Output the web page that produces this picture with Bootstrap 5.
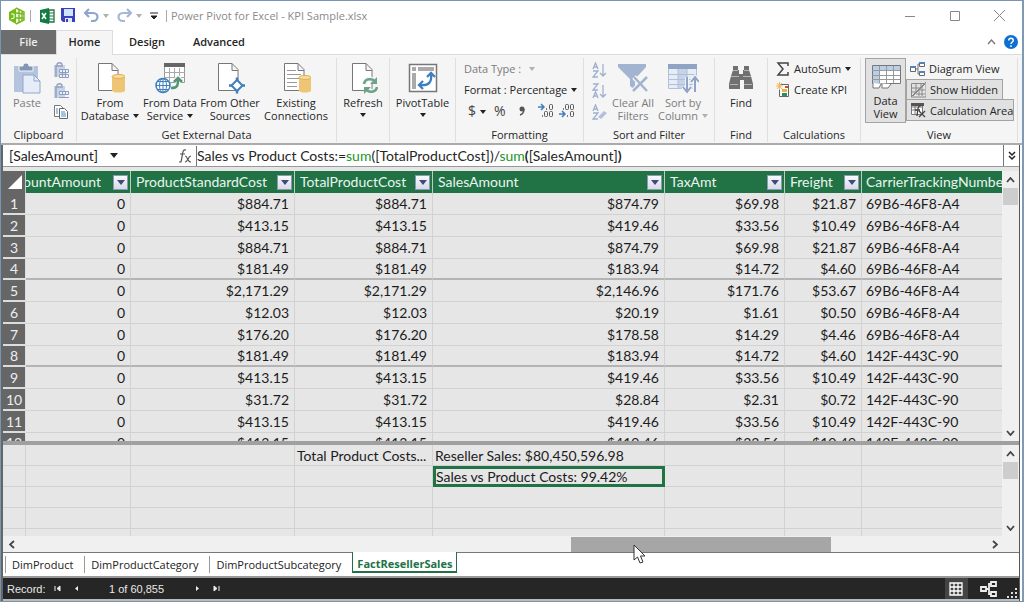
<!DOCTYPE html>
<html lang="en">
<head>
<meta charset="utf-8">
<meta name="viewport" content="width=device-width, initial-scale=1">
<title>Power Pivot for Excel - KPI Sample.xlsx</title>
<link rel="stylesheet" href="https://cdn.jsdelivr.net/npm/bootstrap@5.3.0/dist/css/bootstrap.min.css">
<style>
body{font:11px/13px "Open Sans",sans-serif;color:#262626;background:#fff}
button{color:inherit;font:inherit;background:none;border:0;padding:0}
svg{display:block;flex:none}
.app{height:100vh;min-height:480px;border:1px solid #7896b4;border-bottom-color:#7b93a8;border-right:2px solid #7f9ab5}
.caret{display:inline-block;border:3px solid transparent;border-top:4px solid #222;border-bottom:0;vertical-align:2px;margin-left:4px}
.dim{color:#7c7c7c}.dim .caret,.caret.dim{border-top-color:#b0b0b0}
/* title bar */
.titlebar{height:29px;padding-left:7px;color:#8a8a8a}
.titlebar .vsep{width:1px;height:12px;background:#aaa}
.wctl{width:45px;height:28px}
/* ribbon tabs */
.rtabs{height:24px}
.rtabs a{height:24px;line-height:24px;color:#262626;text-decoration:none;text-align:center;font-weight:600;font-size:11px}
.rtabs .filetab{background:#6d6d6d;color:#eee;width:55px}
.rtabs .active{background:#f5f5f5;border:1px solid #dcdcdc;border-bottom:0;width:57px;line-height:22px;height:25px;z-index:1}
/* ribbon */
.ribbon{height:91px;background:#f5f5f5;border-top:1px solid #dcdcdc;border-bottom:2px solid #ababab}
.rgroup{border-right:1px solid #dfdfdf;margin:3px 0 4px;height:84px}
.rgroup .gbody{height:70px;flex:none}
.rgroup .gname{text-align:center}
.big{display:flex;flex-direction:column;align-items:center;padding-top:4px;white-space:nowrap;flex:none}
.big svg{margin-bottom:2px}
.line{display:flex;align-items:center;height:21px;white-space:nowrap}
.pressed{background:#e1e1e1;border:1px solid #a3a3a3}
.pressed+.pressed{margin-top:-1px;height:22px}
/* sheet */
.sheet{border-left:2px solid #666;border-right:1px solid #555;margin-right:2px;background:#e6e6e6;font:14px/20px Lato,sans-serif;min-height:0}
.fbar{height:22px;background:#fff;border-bottom:1px solid #999;flex:none}
.fbar select{border:0;background:#fff;font:inherit;color:#222;outline:0;padding:0;appearance:none}
.fbar .names{width:103px;padding-left:6px}
.ftext{white-space:nowrap}
.ftext i{font-style:normal;color:#1d9428}
.data{table-layout:fixed;width:100%;border-collapse:separate;border-spacing:0;color:#1c1c1c}
.data th,.data td{padding:0 5px;height:22px;line-height:20px;overflow:hidden;white-space:nowrap;font-weight:400;border-right:1px solid #d2d2d2;border-bottom:1px solid #d2d2d2;text-align:right}
.data thead th{background:#217346;color:#e9f5ee;text-align:left;border-bottom:0;height:22px;border-right-color:#b7d0c2;padding:0 2px 0 5px}
.data tbody th{background:#666;color:#eee;text-align:center;padding:0;border-bottom:2px solid #ddd;border-right-color:#ddd;font-size:14px;line-height:19px}
.rows tbody tr:nth-child(4n) td{height:21px;line-height:19px;border-bottom:2px solid #b4b4b4}
.rows tbody tr:nth-child(4n) th{height:21px;line-height:18px}
.data td:last-child,.data th:last-child{text-align:left;padding-left:4px;border-right:0}
.data thead th:first-child{padding:0;background:#666}
.clipleft{display:flex;justify-content:flex-end;overflow:hidden;flex:1;min-width:0;margin-right:12px}
.filt{width:15px;height:15px;flex:none;background:linear-gradient(#f8f9fd,#d8dae6);border:1px solid #8d98b5;display:flex;align-items:center;justify-content:center}
.filt:before{content:"";border:4px solid transparent;border-top:5px solid #3f4a7d;border-bottom:0}
.split{height:4px;background:#a0a0a0;flex:none}
.calc{height:91px;overflow:hidden;flex:none}
.calc .data td{height:21px;line-height:19px;text-align:left;padding:0 2px;font-size:14px}
.calc .data td.sel{border:3px solid #217346;line-height:15px;padding:0}
.vbar{width:17px;background:#f0f0f0;flex:none}
.vbar button{height:17px;width:17px;display:flex;align-items:center;justify-content:center}
.vthumb{height:17px;background:#cdcdcd;margin:0 1px}
.hbar{height:17px;background:#f0f0f0;border-bottom:1px solid #777;flex:none;font-size:0}
.hbar button{width:17px;display:flex;align-items:center;justify-content:center}
.hthumb{background:#a6a6a6;height:15px;position:absolute;left:57%;width:27%;top:1px}
.pointer{position:absolute;left:24%;top:7px;z-index:3}
.stabs{height:25px;background:#fff;flex:none;font:11px/20px "Open Sans",sans-serif;border-bottom:2px solid #999;padding-left:2px}
.stabs a{color:#222;text-decoration:none;border-left:1px solid #999;height:17px;line-height:17px;padding:0 11px 0 6px;margin-top:3px}
.stabs a.on{color:#217346;font-weight:700;border:2px solid #217346;border-width:0 1px 2px;height:21px;line-height:23px;margin-top:-1px;padding:0 4px;background:#fff;position:relative}
.status{height:23px;background:#262626;color:#e8e8e8;font:11px/20px "Liberation Sans",sans-serif;flex:none;border-bottom:2px solid #bbb}
.status .step{margin-left:13px}
</style>
</head>
<body>
<div class="app d-flex flex-column overflow-hidden">
<header class="titlebar d-flex align-items-center flex-shrink-0">
  <svg width="18" height="18" viewBox="0 0 18 18"><path d="M1 5 8 1v16l-7-4z" fill="#74ba1d"/><path d="M8 1 16 5v8l-8 4M8 6l8 1M8 11h8M11 3v12M14 4v10" fill="#eff8df" stroke="#74ba1d" stroke-width="1.4"/><path d="M3 7h3v4L3 12" fill="none" stroke="#fff"/></svg>
  <span class="vsep ms-1 me-2"></span>
  <svg width="18" height="16" viewBox="0 0 18 16"><path d="M10 2h5v12h-5z" fill="#fff" stroke="#217346" stroke-width="1.3"/><path d="M10 5h5M10 8h5M10 11h5" stroke="#217346"/><path d="M1 2 10 0v16l-9-2z" fill="#107c41"/><path d="m3 5 4 6M7 5l-4 6" stroke="#fff" stroke-width="1.5"/></svg>
  <svg class="ms-1" width="15" height="15" viewBox="0 0 15 15"><path d="M0 0h14v14H2l-2-2z" fill="#3640c0"/><path d="M3 1h9v7H3z" fill="#cfe3ff"/><path d="M4 10h7v4H4z" fill="#e6e6f4"/><path d="M5 11h2v3H5z" fill="#3640c0"/></svg>
  <svg class="ms-2" width="15" height="15" viewBox="0 0 15 15"><path d="M5 1 1 5l4 4M2 5h7c6 0 6 8 0 8H7" fill="none" stroke="#8ea4cf" stroke-width="2.200"/></svg>
  <span class="caret dim"></span>
  <svg class="ms-2" width="15" height="15" viewBox="0 0 15 15"><path d="m10 1 4 4-4 4M13 5H6c-6 0-6 8 0 8h2" fill="none" stroke="#a5b6d6" stroke-width="2.200"/></svg>
  <span class="caret dim"></span>
  <svg class="ms-2" width="8" height="8" viewBox="0 0 8 8"><path d="M0 1h8M1 4h6L4 7z" fill="#222" stroke="#222"/></svg>
  <span class="vsep ms-2"></span>
  <span class="flex-fill text-nowrap ps-1">Power Pivot for Excel - KPI Sample.xlsx</span>
  <button class="wctl" aria-label="Minimize"><svg class="m-auto" width="10" height="10"><path d="M0 5.500h10" stroke="#888"/></svg></button>
  <button class="wctl" aria-label="Maximize"><svg class="m-auto" width="10" height="10"><path d="M.5.5h9v9h-9z" fill="none" stroke="#888"/></svg></button>
  <button class="wctl" aria-label="Close"><svg class="m-auto" width="11" height="11"><path d="m0 0 11 11M11 0 0 11" stroke="#888"/></svg></button>
</header>
<nav class="rtabs d-flex flex-shrink-0">
  <a class="filetab" href="#">File</a><a class="active position-relative" href="#">Home</a><a class="ps-3 pe-3" href="#">Design</a><a class="ps-2 ms-1" href="#">Advanced</a>
  <div class="ms-auto d-flex align-items-center gap-2 pe-1">
   <svg width="9" height="6"><path d="m1 5 3.500-4L8 5" fill="none" stroke="#777" stroke-width="1.300"/></svg>
   <button aria-label="Help"><svg width="14" height="14"><circle cx="7" cy="7" r="7" fill="#0f6fd0"/><path d="M4.700 5.500c0-3 4.600-3 4.600 0C9.300 7 7 7 7 9M7 10.200V12" fill="none" stroke="#fff" stroke-width="1.400"/></svg></button>
  </div>
</nav>
<section class="ribbon d-flex flex-shrink-0">
  <div class="rgroup" style="width:76px">
    <div class="gbody d-flex">
      <button class="big dim" style="width:52px"><svg width="30" height="32" viewBox="0 0 30 32"><path d="M2 4h24v26H2z" fill="#b5c4de"/><path d="M7 4h4c0-4 6-4 6 0h4v5H7z" fill="#8496b5" stroke="#f5f5f5"/><path d="M11 13h11l6 6v12H11z" fill="#e6edf8" stroke="#90a5ca"/><path d="M22 13v6h6" fill="none" stroke="#90a5ca"/></svg>Paste</button>
      <div class="d-flex flex-column gap-1 pt-1">
        <button aria-label="Paste append"><svg width="17" height="17"><path d="M1 3h11v12H1z" fill="#c9d3e4"/><path d="M4 3c0-3 5-3 5 0M3 4h7M3 3v12" fill="none" stroke="#93a3c0" stroke-width="1.500"/><path d="M6.500 7.500h9v3h-9zM6.500 12.500h9v3h-9zM9.500 7v9M12.500 7v9" fill="#eef2f8" stroke="#8d9fc0"/></svg></button>
        <button aria-label="Paste replace"><svg width="17" height="17"><path d="M1 3h11v12H1z" fill="#c9d3e4"/><path d="M4 3c0-3 5-3 5 0M3 4h7M3 3v12" fill="none" stroke="#93a3c0" stroke-width="1.500"/><path d="M6.500 8.500h9v3h-9zM6 14.500h10M9.500 8v4M12.500 8v4" fill="#eef2f8" stroke="#8d9fc0"/></svg></button>
        <button aria-label="Copy"><svg width="17" height="16"><path d="M1.500 1.500h6l3 3v8h-9z" fill="#fff" stroke="#777"/><path d="M6.500 4.500h5l3 3v7h-8z" fill="#fff" stroke="#666"/><path d="M3 5h2M3 7h2M3 9h2M8 8h4M8 10h5M8 12h5" stroke="#4a86c6"/></svg></button>
      </div>
    </div>
    <div class="gname">Clipboard</div>
  </div>
  <div class="rgroup" style="width:260px">
    <div class="gbody d-flex">
      <button class="big" style="width:66px"><svg width="30" height="32" viewBox="0 0 30 32"><path d="M3.500 1.500H17l6 6v21H3.500zM17 1.500v7h6" fill="#fff" stroke="#777"/><path d="M17 14h13v15c-3 2-10 2-13 0z" fill="#edc574"/><ellipse cx="23.500" cy="14.500" rx="6.500" ry="2" fill="#f7dba0" stroke="#e0af50"/></svg><span>From<br>Database<i class="caret"></i></span></button>
      <button class="big" style="width:54px"><svg width="32" height="32" viewBox="0 0 32 32"><path d="M10.500 2.500h20v18h-20z" fill="#fff" stroke="#999"/><path d="M10 1h21v4H10z" fill="#666"/><path d="M10 10.500h21M10 15.500h21M15.500 6v14M20.500 6v14M25.500 6v14" stroke="#aaa"/><circle cx="9" cy="23.500" r="7" fill="#fff" stroke="#3f7fbd" stroke-width="1.500"/><path d="M2 23.500h14M9 16v15M4 19.500h10M4 27.500h10" stroke="#3f7fbd" fill="none"/><ellipse cx="9" cy="23.500" rx="3.500" ry="7" fill="none" stroke="#3f7fbd"/><path d="M17 26c7 0 7-3 7-9M20 20l4-4 4 4" fill="none" stroke="#f5f5f5" stroke-width="5"/><path d="M17 26c7 0 7-3 7-9M20 20l4-4 4 4" fill="none" stroke="#559477" stroke-width="2.500"/></svg><span>From Data<br>Service<i class="caret"></i></span></button>
      <button class="big" style="width:66px"><svg width="30" height="32" viewBox="0 0 30 32"><path d="M3.500 1.500H17l6 6v21H3.500zM17 1.500v7h6" fill="#fff" stroke="#777"/><path d="M14 23.500h16M22 15.500v16" stroke="#3f7fbd" stroke-width="2.500"/><path d="m22 18 5.500 5.500L22 29l-5.500-5.500z" fill="#fff" stroke="#3f7fbd" stroke-width="2"/></svg><span>From Other<br>Sources</span></button>
      <button class="big" style="width:66px"><svg width="30" height="32" viewBox="0 0 30 32"><path d="M3.500 1.500H17l6 6v21H3.500zM17 1.500v7h6" fill="#fff" stroke="#777"/><path d="M6 8.500h9M6 12.500h14M6 16.500h12M6 20.500h10M6 24.500h10" stroke="#999"/><path d="M18 15h12v14c-3 2-9 2-12 0z" fill="#edc574"/><ellipse cx="24" cy="15.500" rx="6" ry="2" fill="#f7dba0" stroke="#e0af50"/></svg><span>Existing<br>Connections</span></button>
    </div>
    <div class="gname">Get External Data</div>
  </div>
  <div class="rgroup" style="width:53px"><button class="big w-100"><svg width="30" height="32" viewBox="0 0 30 32"><path d="M4.500 1.500H18l6 6v21H4.500zM18 1.500v7h6" fill="#fff" stroke="#777"/><path d="M16 22c1-6 9-6 11-2M29 25c-1 6-9 6-11 2" fill="none" stroke="#f5f5f5" stroke-width="5"/><path d="M16 22c1-6 9-6 11-2M29 25c-1 6-9 6-11 2" fill="none" stroke="#6aa38a" stroke-width="2.500"/><path d="M29 15v7h-7zM16 32v-7h7z" fill="#6aa38a"/></svg>Refresh<i class="caret mt-1 ms-0"></i></button></div>
  <div class="rgroup" style="width:66px"><button class="big w-100"><svg width="30" height="32" viewBox="0 0 30 32"><path d="M1.500 2.500h27v27h-27z" fill="#fff" stroke="#777" stroke-width="1.500"/><path d="M4 5h4v4H4zM10 5h16v4H10zM4 11h4v16H4z" fill="#aaa"/><path d="M12 23c9 1 12-3 11-11M15 19l-4 4 4 4M19 15l4-4 4 4" fill="none" stroke="#3f7fbd" stroke-width="2.300"/></svg>PivotTable<i class="caret mt-1 ms-0"></i></button></div>
  <div class="rgroup" style="width:128px">
    <div class="gbody ps-2">
      <button class="line dim">Data Type :<i class="caret ms-2"></i></button>
      <button class="line">Format : Percentage<i class="caret"></i></button>
      <div class="line" style="font-size:14px;color:#444">
        <button class="ms-1" aria-label="Currency">$<i class="caret ms-1"></i></button><button class="ms-2">%</button>
        <button class="ms-2 ps-1" aria-label="Thousands separator"><svg width="8" height="12"><circle cx="4" cy="4" r="2.500" fill="#555"/><path d="M6 4c0 3-1 5-4 6" fill="none" stroke="#555" stroke-width="1.500"/></svg></button>
        <button class="ms-2 ps-1" aria-label="Increase decimal"><svg width="17" height="15"><path d="M0 4h6M3 1l3 3-3 3" fill="none" stroke="#3f7fbd" stroke-width="1.500"/><path d="M8 6h1M4 13h1" stroke="#555" stroke-width="1.500"/><g fill="none" stroke="#555"><rect x="11.500" y="1.500" width="3" height="5" rx="1"/><rect x="6.500" y="8.500" width="3" height="5" rx="1"/><rect x="11.500" y="8.500" width="3" height="5" rx="1"/></g></svg></button>
        <button class="ms-1" aria-label="Decrease decimal"><svg width="17" height="15"><path d="M0 11h6M3 8l3 3-3 3" fill="none" stroke="#3f7fbd" stroke-width="1.500"/><path d="M4 6h1M8 13h1" stroke="#555" stroke-width="1.500"/><g fill="none" stroke="#555"><rect x="6.500" y="1.500" width="3" height="5" rx="1"/><rect x="11.500" y="1.500" width="3" height="5" rx="1"/><rect x="11.500" y="8.500" width="3" height="5" rx="1"/></g></svg></button>
      </div>
    </div>
    <div class="gname">Formatting</div>
  </div>
  <div class="rgroup" style="width:131px">
    <div class="gbody d-flex dim">
      <div class="d-flex flex-column gap-1 ps-2 pt-1" style="width:25px">
        <button aria-label="Sort A to Z"><svg width="15" height="17"><path d="m1 7 2.500-6L6 7M2 5h3M1 9h5l-5 6h5M11 2v12M8 11l3 3 3-3" fill="none" stroke="#9fb0ce" stroke-width="1.300"/></svg></button>
        <button aria-label="Sort Z to A"><svg width="15" height="17"><path d="M1 1h5L1 7h5M1 15l2.500-6L6 15M2 13h3M11 2v12M8 11l3 3 3-3" fill="none" stroke="#9fb0ce" stroke-width="1.300"/></svg></button>
        <button aria-label="Clear sort"><svg width="15" height="17"><path d="m1 7 2.500-6L6 7M2 5h3M1 9h5l-5 6h5" fill="none" stroke="#9fb0ce" stroke-width="1.300"/><path d="m6 13 6-6 3 2-6 6z" fill="#b2c0d9"/></svg></button>
      </div>
      <button class="big" style="width:48px"><svg width="32" height="32" viewBox="0 0 32 32"><path d="M1 2h28v3L18 17v11l-5-4v-7L1 5z" fill="#a3b4d1"/><path d="m17 15 13 14M30 15 16 29" stroke="#f5f5f5" stroke-width="5"/><path d="m17 15 13 14M30 15 16 29" stroke="#a3b4d1" stroke-width="2.500"/></svg><span>Clear All<br>Filters</span></button>
      <button class="big" style="width:52px"><svg width="32" height="32" viewBox="0 0 32 32"><path d="M1.500 2.500h28v24h-28z" fill="#e7edf6" stroke="#b1c0d9"/><path d="M1 2h29v5H1z" fill="#8fa3c5"/><path d="M11 7h9v19h-9z" fill="#c7d4e7"/><path d="M1 12.500h29M1 17.500h29M1 22.500h29M11 7v19M20 7v19" stroke="#b1c0d9"/><path d="M20 15v14M16 25l4 5 4-5M28 30V16M24 20l4-5 4 5" fill="none" stroke="#f5f5f5" stroke-width="4"/><path d="M20 15v14M16 25l4 5 4-5M28 30V16M24 20l4-5 4 5" fill="none" stroke="#8fa3c5" stroke-width="2"/></svg><span>Sort by<br>Column<i class="caret"></i></span></button>
    </div>
    <div class="gname">Sort and Filter</div>
  </div>
  <div class="rgroup" style="width:53px"><div class="gbody"><button class="big w-100"><svg width="28" height="32" viewBox="0 0 28 32"><path d="M6 4h5v4h1v4h4V8h1V4h5v4l2 6 2 8v5h-9v-9h-4v9H2v-5l2-8 2-6z" fill="#707070"/><path d="M6 8.500h5M17 8.500h5M4 14.500h8M16 14.500h8M3 22.500h8M17 22.500h8" stroke="#b5b5b5"/></svg>Find</button></div><div class="gname">Find</div></div>
  <div class="rgroup" style="width:93px">
    <div class="gbody ps-2">
      <button class="line"><svg class="me-1" width="14" height="14"><path d="M12 4V1H2l5 6-5 6h10v-3" fill="none" stroke="#444" stroke-width="1.500"/></svg>AutoSum<i class="caret"></i></button>
      <button class="line"><svg class="me-1" width="14" height="16"><path d="M3.500 2.500h9v12h-9z" fill="#fff" stroke="#666"/><path d="M9 4h3v2H9z" fill="#d04a30"/><path d="M6 7h5v3H6z" fill="#e9b34b"/><path d="M6 11h5v3H6z" fill="#328b5c"/><path d="M0 4h7M3.500 0v8M1 1l5 6M6 1 1 7" stroke="#efb55a"/></svg>Create KPI</button>
    </div>
    <div class="gname">Calculations</div>
  </div>
  <div class="rgroup flex-fill me-1">
    <div class="gbody d-flex">
      <button class="big pressed ms-1" style="width:41px;height:65px"><svg width="30" height="29" viewBox="0 0 30 29"><path d="M1.500 2.500h28v18h-28z" fill="#fff" stroke="#777"/><path d="M2 3h27v4H2zM2 3h6v17H2z" fill="#b9cfe8"/><path d="M1 7.500h28M1 12.500h28M1 16.500h28M8.500 3v17M15.500 3v17M22.500 3v17" stroke="#999"/><path d="M2 20v5h6l2-4h1v4h6l3-4" fill="#fff" stroke="#777"/></svg><span>Data<br>View</span></button>
      <div class="d-flex flex-column align-items-start">
        <button class="line px-1"><svg class="me-1" width="15" height="16"><path d="M5 8h3M8 3v10M8 3h2M8 13h2" stroke="#777" fill="none"/><path d="M.5 5.500h5v5h-5zM9.500 1.500h5v4h-5zM9.500 10.500h5v4h-5z" fill="#fff" stroke="#666"/><path d="M0 5h6v2H0zM9 1h6v2H9zM9 10h6v2H9z" fill="#4f84bd"/></svg>Diagram View</button>
        <button class="line pressed px-1"><svg class="me-1" width="15" height="16"><path d="M.5 1.500h14v13H.5zM5 1v14M10 1v14M0 6h15M0 10h15" fill="none" stroke="#888"/><path d="M0 15 15 0v15z" fill="#e8e8e8" stroke="#888"/><path d="m2 14 12-12M8 14V9M5 12h9M11 14V5M8 8h6" stroke="#888"/></svg>Show Hidden</button>
        <button class="line pressed ps-1"><svg class="me-1" width="15" height="16"><path d="M.5 2.500h11v10H.5zM1 5h10M1 8h5M4 3v9" fill="#fff" stroke="#777"/><path d="M0 1h13v3H0z" fill="#555"/><path d="M10 4c-3-1-3 2-4 10M4 8h5M8 9l6 6M14 9l-6 6" fill="none" stroke="#444" stroke-width="1.300"/></svg>Calculation Area</button>
      </div>
    </div>
    <div class="gname">View</div>
  </div>
</section>
<main class="sheet d-flex flex-column flex-fill">
  <div class="fbar d-flex align-items-center">
    <select class="names" aria-label="Measure name"><option>[SalesAmount]</option></select><i class="caret" style="border-width:5px 4px 0"></i>
    <svg class="ms-auto" style="margin-right:4px" width="14" height="14"><path d="M8 1C4 0 5 5 3 13H1M2 5h5M7 7c3 0 2 6 6 6M13 7c-3 0-3 6-6 6" fill="none" stroke="#555" stroke-width="1.200"/></svg>
    <div class="ftext border-start border-secondary flex-fill" role="textbox" contenteditable="true" aria-label="Formula" style="max-width:807px">Sales vs Product Costs:=<i>sum</i>([TotalProductCost])/<i>sum</i><b>(</b>[SalesAmount]<b>)</b></div>
    <button class="border-start border-secondary h-100" style="width:16px" aria-label="Expand formula bar"><svg class="m-auto" width="8" height="10"><path d="m1 1 3 3 3-3M1 5l3 3 3-3" fill="none" stroke="#222" stroke-width="1.500"/></svg></button>
  </div>
  <div class="d-flex flex-fill overflow-hidden pt-1" style="min-height:0">
    <div class="flex-fill overflow-hidden">
    <table class="data rows">
      <colgroup><col style="width:23px"><col style="width:105px"><col style="width:164px"><col style="width:138px"><col style="width:232px"><col style="width:120px"><col style="width:77px"><col></colgroup>
      <thead><tr>
        <th aria-label="Select all"><svg width="22" height="22"><path d="M19 4v14H5z" fill="#fff"/></svg></th>
        <th class="ps-0"><div class="d-flex align-items-center"><span class="clipleft"><span>DiscountAmount</span></span><button class="filt" aria-label="Filter"></button></div></th>
        <th><div class="d-flex align-items-center justify-content-between">ProductStandardCost<button class="filt" aria-label="Filter"></button></div></th>
        <th><div class="d-flex align-items-center justify-content-between">TotalProductCost<button class="filt" aria-label="Filter"></button></div></th>
        <th><div class="d-flex align-items-center justify-content-between">SalesAmount<button class="filt" aria-label="Filter"></button></div></th>
        <th><div class="d-flex align-items-center justify-content-between">TaxAmt<button class="filt" aria-label="Filter"></button></div></th>
        <th><div class="d-flex align-items-center justify-content-between">Freight<button class="filt" aria-label="Filter"></button></div></th>
        <th>CarrierTrackingNumber</th></tr></thead>
      <tbody>
        <tr><th>1</th><td>0</td><td>$884.71</td><td>$884.71</td><td>$874.79</td><td>$69.98</td><td>$21.87</td><td>69B6-46F8-A4</td></tr>
        <tr><th>2</th><td>0</td><td>$413.15</td><td>$413.15</td><td>$419.46</td><td>$33.56</td><td>$10.49</td><td>69B6-46F8-A4</td></tr>
        <tr><th>3</th><td>0</td><td>$884.71</td><td>$884.71</td><td>$874.79</td><td>$69.98</td><td>$21.87</td><td>69B6-46F8-A4</td></tr>
        <tr><th>4</th><td>0</td><td>$181.49</td><td>$181.49</td><td>$183.94</td><td>$14.72</td><td>$4.60</td><td>69B6-46F8-A4</td></tr>
        <tr><th>5</th><td>0</td><td>$2,171.29</td><td>$2,171.29</td><td>$2,146.96</td><td>$171.76</td><td>$53.67</td><td>69B6-46F8-A4</td></tr>
        <tr><th>6</th><td>0</td><td>$12.03</td><td>$12.03</td><td>$20.19</td><td>$1.61</td><td>$0.50</td><td>69B6-46F8-A4</td></tr>
        <tr><th>7</th><td>0</td><td>$176.20</td><td>$176.20</td><td>$178.58</td><td>$14.29</td><td>$4.46</td><td>69B6-46F8-A4</td></tr>
        <tr><th>8</th><td>0</td><td>$181.49</td><td>$181.49</td><td>$183.94</td><td>$14.72</td><td>$4.60</td><td>142F-443C-90</td></tr>
        <tr><th>9</th><td>0</td><td>$413.15</td><td>$413.15</td><td>$419.46</td><td>$33.56</td><td>$10.49</td><td>142F-443C-90</td></tr>
        <tr><th>10</th><td>0</td><td>$31.72</td><td>$31.72</td><td>$28.84</td><td>$2.31</td><td>$0.72</td><td>142F-443C-90</td></tr>
        <tr><th>11</th><td>0</td><td>$413.15</td><td>$413.15</td><td>$419.46</td><td>$33.56</td><td>$10.49</td><td>142F-443C-90</td></tr>
        <tr><th>12</th><td>0</td><td>$413.15</td><td>$413.15</td><td>$419.46</td><td>$33.56</td><td>$10.49</td><td>142F-443C-90</td></tr>
      </tbody>
    </table>
    </div>
    <div class="vbar d-flex flex-column">
      <button aria-label="Scroll up"><svg width="9" height="6"><path d="m1 5 3.500-4L8 5" fill="none" stroke="#444" stroke-width="1.800"/></svg></button><div class="vthumb"></div>
      <button class="mt-auto" aria-label="Scroll down"><svg width="9" height="6"><path d="m1 1 3.500 4L8 1" fill="none" stroke="#444" stroke-width="1.800"/></svg></button>
    </div>
  </div>
  <div class="split"></div>
  <div class="calc d-flex">
    <div class="flex-fill overflow-hidden">
    <table class="data">
      <colgroup><col style="width:23px"><col style="width:105px"><col style="width:164px"><col style="width:138px"><col style="width:232px"><col style="width:120px"><col style="width:77px"><col></colgroup>
      <tbody>
        <tr><td></td><td></td><td></td><td>Total Product Costs...</td><td>Reseller Sales: $80,450,596.98</td><td></td><td></td><td></td></tr>
        <tr><td></td><td></td><td></td><td></td><td class="sel">Sales vs Product Costs: 99.42%</td><td></td><td></td><td></td></tr>
        <tr><td></td><td></td><td></td><td></td><td></td><td></td><td></td><td></td></tr>
        <tr><td></td><td></td><td></td><td></td><td></td><td></td><td></td><td></td></tr>
        <tr><td></td><td></td><td></td><td></td><td></td><td></td><td></td><td></td></tr>
      </tbody>
    </table>
    </div>
    <div class="vbar d-flex flex-column">
      <button aria-label="Scroll up"><svg width="9" height="6"><path d="m1 5 3.500-4L8 5" fill="none" stroke="#444" stroke-width="1.800"/></svg></button><div class="vthumb"></div>
      <button class="mt-auto" aria-label="Scroll down"><svg width="9" height="6"><path d="m1 1 3.500 4L8 1" fill="none" stroke="#444" stroke-width="1.800"/></svg></button>
    </div>
  </div>
  <div class="hbar d-flex pe-3">
    <button aria-label="Scroll left"><svg width="6" height="9"><path d="M5 1 1 4.500 5 8" fill="none" stroke="#444" stroke-width="1.800"/></svg></button>
    <div class="flex-fill position-relative"><div class="hthumb"><svg class="pointer" width="13" height="20"><path d="M1 1v15l3.500-3 2.500 6 3-1-2.500-6H12z" fill="#fff" stroke="#333"/></svg></div></div>
    <button aria-label="Scroll right"><svg width="6" height="9"><path d="m1 1 4 3.500L1 8" fill="none" stroke="#444" stroke-width="1.800"/></svg></button>
  </div>
  <nav class="stabs d-flex"><a href="#">DimProduct</a><a href="#">DimProductCategory</a><a href="#">DimProductSubcategory</a><a class="on" href="#">FactResellerSales</a></nav>
  <footer class="status d-flex align-items-center ps-1">
    <span>Record:</span>
    <button class="ms-2" aria-label="First"><svg width="7" height="7"><path d="M1 1v5M6 1v5L3 3.500z" fill="#eee" stroke="#eee"/></svg></button>
    <button class="step" aria-label="Previous"><svg width="5" height="7"><path d="M4 1v5L1 3.500z" fill="#eee"/></svg></button>
    <span class="text-center" style="width:116px">1 of 60,855</span>
    <button aria-label="Next"><svg width="5" height="7"><path d="M1 1v5l3-2.500z" fill="#eee"/></svg></button>
    <button class="step" aria-label="Last"><svg width="7" height="7"><path d="M6 1v5M1 1v5l3-2.500z" fill="#eee" stroke="#eee"/></svg></button>
    <button class="ms-auto h-100 px-1" style="background:#444" aria-label="Data view"><svg width="15" height="14"><path d="M1 1h12v12H1zM5 1v12M9 1v12M1 5h12M1 9h12" fill="none" stroke="#fff" stroke-width="1.300"/></svg></button>
    <button class="ms-2 ps-1" aria-label="Diagram view"><svg width="18" height="16"><path d="M1 6h5v4H1zM11 1h5v4h-5zM11 11h5v4h-5zM6 8h3M11 3H9v10h2" fill="none" stroke="#eee" stroke-width="1.800"/></svg></button>
    <svg class="ms-2 align-self-end" width="13" height="13"><path d="M9 2h2v2H9zM9 6h2v2H9zM5 6h2v2H5zM9 10h2v2H9zM5 10h2v2H5zM1 10h2v2H1z" fill="#ddd"/></svg>
  </footer>
</main>
</div>
<script src="https://cdn.jsdelivr.net/npm/bootstrap@5.3.0/dist/js/bootstrap.bundle.min.js"></script>
</body>
</html>
